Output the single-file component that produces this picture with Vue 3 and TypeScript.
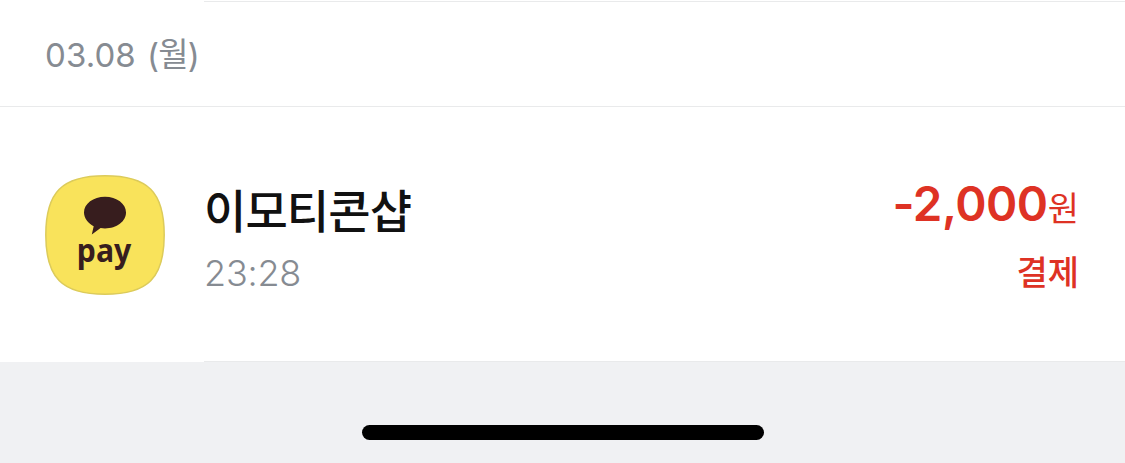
<script setup lang="ts">
interface Transaction {
  merchant: string
  time: string
  amount: string
  unit: string
  kind: string
}

const date = { digits: '03.08', weekday: '월' }
const transaction: Transaction = {
  merchant: '이모티콘샵',
  time: '23:28',
  amount: '-2,000',
  unit: '원',
  kind: '결제',
}
</script>

<template>
  <main class="screen">
    <section class="history">
      <div class="divider inset"></div>
      <header class="date">
        <span class="digits">{{ date.digits }}</span>
        <span class="weekday">(<span class="hangul">{{ date.weekday }}</span>)</span>
      </header>
      <article class="row">
        <svg class="logo" viewBox="0 0 120 120" role="img" aria-label="pay">
          <path
            d="M60 .8C103 .8 119.200 17 119.200 60S103 119.200 60 119.200.8 103 .8 60 17 .8 60 .8Z"
            fill="#f9e35b"
            stroke="#dccb5b"
            stroke-width="1.5"
          />
          <path
            d="M60 21.800C71.700 21.800 81 28.800 81 37.600S71.700 53.500 60 53.500C58.500 53.500 57 53.400 55.600 53.100L46.800 59.400 48.700 51.200C42.900 48.300 39 43.300 39 37.600 39 28.800 48.300 21.800 60 21.800Z"
            fill="#371d1e"
          />
          <text class="wordmark" x="31.800" y="87" textLength="54.500" lengthAdjust="spacingAndGlyphs">pay</text>
        </svg>
        <div class="details">
          <span class="merchant">{{ transaction.merchant }}</span>
          <span class="time">{{ transaction.time }}</span>
        </div>
        <div class="payment">
          <span class="amount">{{ transaction.amount }}<span class="unit">{{ transaction.unit }}</span></span>
          <span class="kind">{{ transaction.kind }}</span>
        </div>
      </article>
      <div class="divider inset"></div>
    </section>
    <footer class="bottom">
      <div class="home-indicator"></div>
    </footer>
  </main>
</template>

<style>
body {
  margin: 0;
}
</style>

<style scoped>
.screen {
  width: 1125px;
  height: 463px;
  display: flex;
  flex-direction: column;
  overflow: hidden;
  background: #f0f1f3;
  font-family: Inter, "Noto Sans CJK KR", sans-serif;
}
.history {
  height: 362px;
  box-sizing: border-box;
  padding-top: 1px;
  display: flex;
  flex-direction: column;
  background: #fff;
}
.divider {
  height: 1px;
  flex: none;
  background: #e9eaeb;
}
.inset {
  margin-left: 204px;
}
.date {
  height: 105px;
  box-sizing: border-box;
  padding: 2px 46px 0 45px;
  display: flex;
  align-items: center;
  border-bottom: 1px solid #e9eaeb;
  color: #868b92;
  font-size: 33px;
  line-height: 40px;
}
.digits {
  letter-spacing: 0.1px;
}
.weekday {
  margin-left: 11px;
  letter-spacing: -0.8px;
}
.hangul {
  font-family: "Noto Sans CJK KR", sans-serif;
  font-size: 33px;
  line-height: 1;
  vertical-align: 1px;
}
.row {
  flex: 1;
  padding: 2px 46px 0 45px;
  display: flex;
  align-items: center;
}
.logo {
  width: 120px;
  height: 120px;
  flex: none;
}
.wordmark {
  fill: #371d1e;
  font-family: "Noto Sans", sans-serif;
  font-size: 33px;
  font-weight: 700;
}
.details,
.payment {
  display: flex;
  flex-direction: column;
}
.details {
  margin-left: 39px;
  padding-top: 4px;
}
.merchant {
  color: #111;
  font-family: "Noto Sans CJK KR", sans-serif;
  font-size: 46px;
  font-weight: 500;
  letter-spacing: -0.9px;
  line-height: 66px;
}
.time {
  margin-top: 5px;
  color: #868b92;
  font-size: 36px;
  font-weight: 300;
  letter-spacing: -0.2px;
  line-height: 54px;
}
.payment {
  margin-left: auto;
  padding-top: 2px;
  align-items: flex-end;
  color: #de3224;
}
.amount {
  font-size: 47.5px;
  font-weight: 600;
  letter-spacing: -0.5px;
  line-height: 60px;
}
.unit {
  font-family: "Noto Sans CJK KR", sans-serif;
  font-size: 34px;
  font-weight: 400;
  letter-spacing: 0;
  line-height: 40px;
}
.kind {
  margin-top: 10px;
  font-family: "Noto Sans CJK KR", sans-serif;
  font-size: 34px;
  font-weight: 500;
  line-height: 54px;
}
.bottom {
  flex: 1;
  display: flex;
  justify-content: center;
  align-items: flex-start;
}
.home-indicator {
  width: 402px;
  height: 15px;
  margin-top: 63px;
  margin-left: 1px;
  border-radius: 8px;
  background: #000;
}
</style>
